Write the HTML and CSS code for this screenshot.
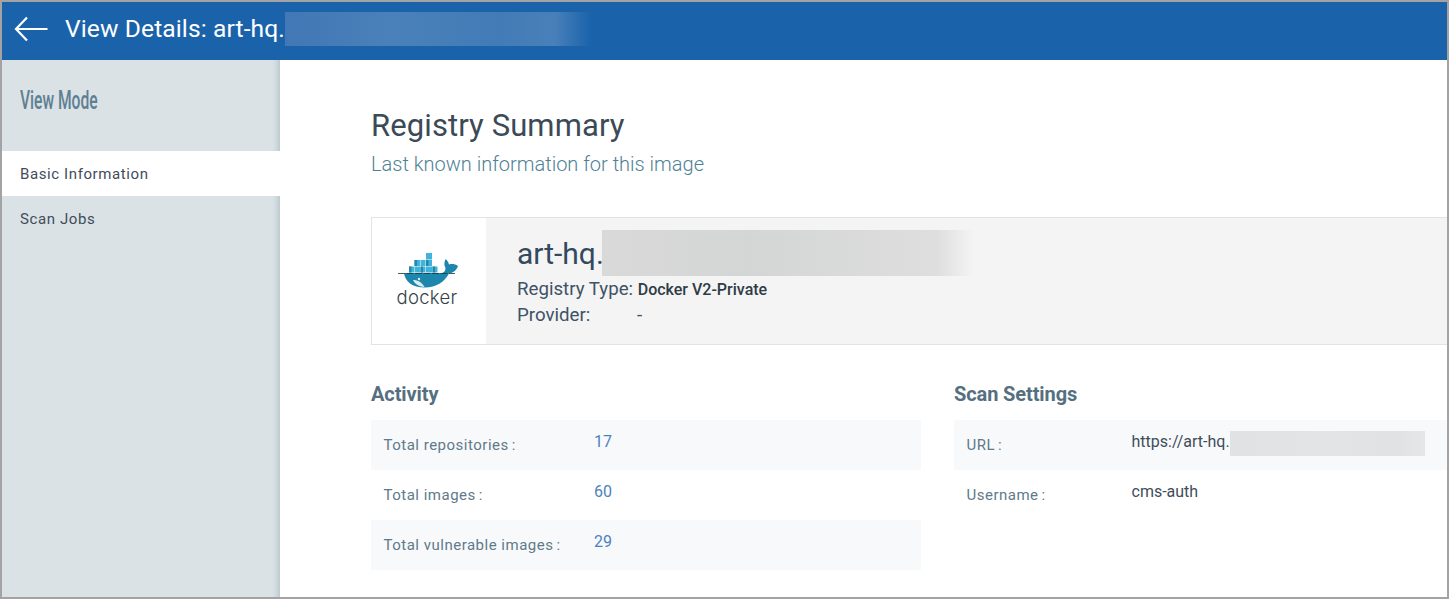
FILE: index.html
```html
<!DOCTYPE html>
<html lang="en">
<head>
<meta charset="utf-8">
<title>View Details</title>
<link rel="stylesheet" href="styles.css">
</head>
<body>
<div class="frame">
  <header class="topbar">
    <svg class="back" viewBox="0 0 34 26" width="34" height="26" aria-hidden="true"><path d="M33.500 13H2M13 1.500L2 13l11 11.500" fill="none" stroke="#fff" stroke-width="2.200"/></svg>
    <h1 class="topbar-title">View Details: art-hq.</h1>
    <span class="smudge smudge-top"></span>
  </header>
  <div class="body">
    <aside class="sidebar">
      <div class="side-title"><span class="side-title-text">View Mode</span></div>
      <nav class="side-nav">
        <a class="side-item active">Basic Information</a>
        <a class="side-item">Scan Jobs</a>
      </nav>
    </aside>
    <main class="main">
      <h2 class="page-title">Registry Summary</h2>
      <p class="page-sub">Last known information for this image</p>
      <section class="card">
        <div class="logo-box">
          <svg class="whale" viewBox="0 0 60 35" width="60" height="35" aria-hidden="true">
            <g fill="#3fb4da">
              <rect x="28" y="0" width="6" height="6.500"/>
              <rect x="16.500" y="7" width="5.500" height="6"/><rect x="22.500" y="7" width="5" height="6"/><rect x="28" y="7" width="6" height="6"/>
              <rect x="11" y="13.500" width="5" height="6"/><rect x="16.500" y="13.500" width="5.500" height="6"/><rect x="22.500" y="13.500" width="5" height="6"/><rect x="28" y="13.500" width="6" height="6"/><rect x="34.500" y="13.500" width="5" height="6"/>
            </g>
            <g fill="#2688a9">
              <rect x="16.500" y="7" width="2.500" height="6"/><rect x="28" y="7" width="2.500" height="6"/><rect x="11" y="13.500" width="2.500" height="6"/><rect x="22.500" y="13.500" width="2.500" height="6"/><rect x="34.500" y="13.500" width="2.500" height="6"/>
            </g>
            <path d="M6 20H44C46.500 19.500 47.500 17.500 47.500 15 46 12.500 46 9.500 47.500 6 49.500 7.500 50.500 9.500 51 11.500 54 10.500 57 11 60 13 58.500 17.500 55 20 51 20.500 46.500 29 38 34.500 27 34.500 14 34.500 7 28.500 6 20Z" fill="#1c86ad"/>
            <path d="M15 27C20 27 24 29.500 26.500 34 20 33.500 17 31 15 27Z" fill="#dcedf2"/>
            <circle cx="21" cy="26" r="1.200" fill="#dcedf2"/>
            <path d="M0 20.500H57" stroke="#24343b" stroke-width=".8" stroke-dasharray="7 1.500"/>
          </svg>
          <span class="docker-word">docker</span>
        </div>
        <div class="card-info">
          <div class="card-name"><span class="card-name-text">art-hq.</span><span class="smudge smudge-name"></span></div>
          <div class="card-line"><span class="card-key">Registry Type:</span> <b class="card-val">Docker V2-Private</b></div>
          <div class="card-line"><span class="card-key card-key-wide">Provider:</span><span>-</span></div>
        </div>
      </section>
      <div class="columns">
        <section class="col col-left">
          <h3 class="col-title">Activity</h3>
          <div class="row shaded"><span class="row-key">Total repositories<i>:</i></span><span class="row-num">17</span></div>
          <div class="row"><span class="row-key">Total images<i>:</i></span><span class="row-num">60</span></div>
          <div class="row shaded"><span class="row-key">Total vulnerable images<i>:</i></span><span class="row-num">29</span></div>
        </section>
        <section class="col col-right">
          <h3 class="col-title">Scan Settings</h3>
          <div class="row shaded"><span class="row-key">URL<i>:</i></span><span class="row-text">https://art-hq.</span><span class="smudge smudge-url"></span></div>
          <div class="row"><span class="row-key">Username<i>:</i></span><span class="row-text">cms-auth</span></div>
        </section>
      </div>
    </main>
  </div>
</div>
</body>
</html>
```
FILE: styles.css
```css
* { box-sizing: border-box; }
html, body { margin: 0; height: 100%; overflow: hidden; background: #fff; }
body { font-family: Roboto, "Liberation Sans", sans-serif; color: #3d4a55; }
.frame { width: 1449px; height: 599px; border: 2px solid #a3a3a3; display: flex; flex-direction: column; overflow: hidden; }
.topbar { height: 58px; flex: none; background: #1a63ab; display: flex; align-items: center; padding: 0 0 5px 12px; color: #fff; }
.back { flex: none; margin-right: 17px; }
.topbar-title { margin: 0; font-size: 24.600px; letter-spacing: .1px; font-weight: 400; line-height: 32px; color: #fff; }
.smudge { display: block; flex: none; }
.smudge-top { width: 306px; height: 34px; background: linear-gradient(90deg, #4178b5 0%, #4a81ba 35%, #427bb6 70%, #4a80b9 88%, #1a63ab 100%); }
.body { flex: 1; display: flex; min-height: 0; }
.sidebar { width: 278px; flex: none; background: linear-gradient(90deg, #dae2e5 0, #dae2e5 270px, #d0dade 274px, #bccad1 278px); }
.side-title { font-size: 25px; font-weight: 500; line-height: 28px; color: #5f7f93; padding: 27px 0 0 18px; height: 91px; }
.side-title-text { display: inline-block; transform: scaleX(.625); transform-origin: 0 50%; white-space: nowrap; }
.side-item { display: block; height: 45px; line-height: 46px; padding-left: 18px; font-size: 15px; letter-spacing: .6px; color: #3f4d5a; }
.side-item.active { background: #fff; }
.main { flex: 1; min-width: 0; padding: 47px 0 0 91px; overflow: hidden; }
.page-title { margin: 0; font-size: 31px; font-weight: 400; line-height: 38px; letter-spacing: .1px; color: #3b4a56; }
.page-sub { margin: 6px 0 0; font-size: 20px; font-weight: 300; line-height: 26px; color: #4f8195; }
.card { margin-top: 40px; width: 1080px; height: 128px; border: 1px solid #dfe5e5; display: flex; }
.logo-box { width: 114px; flex: none; background: #fff; display: flex; flex-direction: column; align-items: center; padding-top: 35px; }
.whale { display: block; margin-left: -3px; }
.docker-word { font-family: Inter, sans-serif; font-weight: 300; font-size: 18.500px; line-height: 16px; letter-spacing: .3px; color: #354247; margin: 1px 0 0 -4px; }
.card-info { flex: 1; background: #f4f4f4; padding: 12px 0 0 31px; font-size: 18.700px; color: #3f5266; }
.card-name { display: flex; font-size: 30px; line-height: 46px; height: 46px; color: #33495d; }
.card-name-text { padding-top: 1px; }
.smudge-name { width: 372px; height: 46px; margin-left: -2px; background: linear-gradient(90deg, #d9d9d9 0, #d4d5d5 40%, #dedede 90%, #f4f4f4 100%); }
.card-line { height: 26px; line-height: 26px; }
.card-key { display: inline-block; }
.card-key-wide { width: 120px; }
.card-val { font-size: 16px; font-weight: 500; color: #2f3b45; }
.columns { display: flex; gap: 33px; margin-top: 30px; }
.col-left { width: 550px; flex: none; }
.col-right { flex: 1; min-width: 0; }
.col-title { margin: 0 0 7px; font-size: 20px; font-weight: 700; line-height: 38px; letter-spacing: -.1px; color: #566f80; }
.row { height: 50px; display: flex; padding-left: 12.500px; font-size: 15px; letter-spacing: .5px; }
.row.shaded { background: #f8f9fb; }
.row-key { width: 210.500px; flex: none; padding-top: 16px; line-height: 18px; color: #607a8a; }
.row-key i { font-style: normal; margin-left: 3px; }
.row-num { padding-top: 13px; line-height: 18px; font-size: 16px; letter-spacing: 0; color: #4b83bd; }
.row-text { padding-top: 13px; line-height: 18px; font-size: 16px; letter-spacing: 0; color: #3f4d5a; }
.col-right .row-key { width: 165px; }
.smudge-url { width: 195px; height: 25px; margin-top: 11px; background: linear-gradient(90deg, #e1e2e4, #e3e4e6 50%, #e1e2e4 85%, #e5e6e8); }
```
